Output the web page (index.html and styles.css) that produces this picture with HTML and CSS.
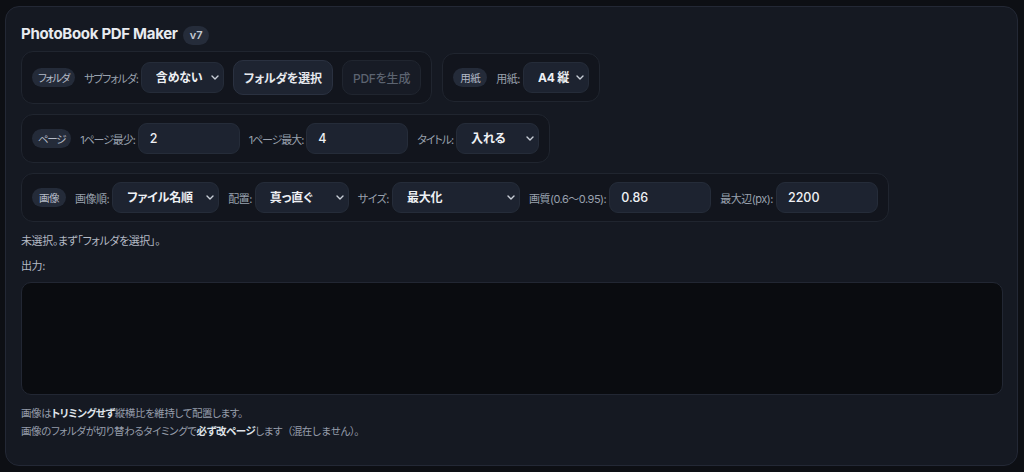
FILE: index.html
```html
<!DOCTYPE html>
<html lang="ja">
<head>
<meta charset="utf-8">
<title>PhotoBook PDF Maker</title>
<link rel="stylesheet" href="styles.css">
</head>
<body>
<main class="card">
  <header class="head">
    <h1 class="title">PhotoBook PDF Maker</h1>
    <span class="badge">v7</span>
  </header>

  <div class="row">
    <section class="group">
      <span class="tag kana">フォルダ</span>
      <label class="field"><span class="lbl kana">サブフォルダ:</span>
        <span class="select w83"><select><option>含めない</option><option>含める</option></select>
          <svg class="chev" viewBox="0 0 8 5" width="8" height="5"><path d="M1 1l3 3 3-3" fill="none" stroke="currentColor" stroke-width="1.4" stroke-linecap="round" stroke-linejoin="round"/></svg></span>
      </label>
      <button class="btn">フォルダを選択</button>
      <button class="btn" disabled>PDFを生成</button>
    </section>
    <section class="group">
      <span class="tag">用紙</span>
      <label class="field"><span class="lbl">用紙:</span>
        <span class="select w66"><select><option>A4 縦</option><option>A4 横</option></select>
          <svg class="chev" viewBox="0 0 8 5" width="8" height="5"><path d="M1 1l3 3 3-3" fill="none" stroke="currentColor" stroke-width="1.4" stroke-linecap="round" stroke-linejoin="round"/></svg></span>
      </label>
    </section>
  </div>

  <div class="row">
    <section class="group">
      <span class="tag kana">ページ</span>
      <label class="field"><span class="lbl kana">1ページ最少:</span><input class="input" type="text" value="2"></label>
      <label class="field"><span class="lbl kana">1ページ最大:</span><input class="input" type="text" value="4"></label>
      <label class="field"><span class="lbl kana">タイトル:</span>
        <span class="select w83"><select><option>入れる</option><option>入れない</option></select>
          <svg class="chev" viewBox="0 0 8 5" width="8" height="5"><path d="M1 1l3 3 3-3" fill="none" stroke="currentColor" stroke-width="1.4" stroke-linecap="round" stroke-linejoin="round"/></svg></span>
      </label>
    </section>
  </div>

  <div class="row">
    <section class="group">
      <span class="tag">画像</span>
      <label class="field"><span class="lbl">画像順:</span>
        <span class="select w107"><select><option>ファイル名順</option><option>撮影日時順</option></select>
          <svg class="chev" viewBox="0 0 8 5" width="8" height="5"><path d="M1 1l3 3 3-3" fill="none" stroke="currentColor" stroke-width="1.4" stroke-linecap="round" stroke-linejoin="round"/></svg></span>
      </label>
      <label class="field"><span class="lbl">配置:</span>
        <span class="select w94"><select><option>真っ直ぐ</option><option>ランダム</option></select>
          <svg class="chev" viewBox="0 0 8 5" width="8" height="5"><path d="M1 1l3 3 3-3" fill="none" stroke="currentColor" stroke-width="1.4" stroke-linecap="round" stroke-linejoin="round"/></svg></span>
      </label>
      <label class="field"><span class="lbl">サイズ:</span>
        <span class="select w128"><select><option>最大化</option><option>ページに合わせる</option></select>
          <svg class="chev" viewBox="0 0 8 5" width="8" height="5"><path d="M1 1l3 3 3-3" fill="none" stroke="currentColor" stroke-width="1.4" stroke-linecap="round" stroke-linejoin="round"/></svg></span>
      </label>
      <label class="field"><span class="lbl">画質(0.6〜0.95):</span><input class="input" type="text" value="0.86"></label>
      <label class="field"><span class="lbl">最大辺(px):</span><input class="input" type="text" value="2200"></label>
    </section>
  </div>

  <p class="status">未選択。まず「フォルダを選択」。</p>
  <p class="out-label">出力:</p>
  <div class="output"></div>

  <div class="notes">
    <p>画像は<b>トリミングせず</b>縦横比を維持して配置します。</p>
    <p>画像のフォルダが切り替わるタイミングで<b>必ず改ページ</b>します<span class="paren">（混在しません）。</span></p>
  </div>
</main>
</body>
</html>
```

FILE: styles.css
```css
* { box-sizing: border-box; }

html, body {
  margin: 0;
  height: 100%;
}

body {
  background: #0d0f14;
  padding: 6px 6px 6px 5px;
  font-family: "Inter", "Noto Sans CJK JP", sans-serif;
  color: #d6dae1;
  font-feature-settings: "palt";
}

.card {
  height: 100%;
  background: #151922;
  border: 1px solid #232835;
  border-radius: 14px;
  padding: 14px 14px 20px 15px;
}

.head {
  display: flex;
  align-items: center;
  gap: 5px;
  height: 24px;
  margin-bottom: 6px;
}

.title {
  margin: 0;
  font-size: 15px;
  font-weight: 700;
  letter-spacing: -0.3px;
  color: #e8ebf0;
  line-height: 24px;
  position: relative;
  top: 1px;
}

.badge {
  display: inline-flex;
  align-items: center;
  height: 19px;
  padding: 0 7px;
  margin-top: 4px;
  border-radius: 10px;
  background: #252c3a;
  color: #c3c9d3;
  font-size: 11px;
  font-weight: 600;
}

.row {
  display: flex;
  align-items: center;
  gap: 10px;
  margin-bottom: 10px;
}

.group {
  display: flex;
  align-items: center;
  gap: 9px;
  padding: 8px 10px;
  background: #12151d;
  border: 1px solid #20252f;
  border-radius: 12px;
}

.tag {
  display: inline-flex;
  align-items: center;
  height: 19px;
  padding: 0 7px;
  border-radius: 10px;
  background: #242b39;
  color: #b5bcc8;
  font-size: 10.5px;
  letter-spacing: -0.5px;
}

.tag.kana {
  padding: 0 6px;
  letter-spacing: -1.3px;
}

.field {
  display: flex;
  align-items: center;
  gap: 3px;
}

.lbl {
  font-size: 11px;
  letter-spacing: -0.5px;
  color: #99a1ae;
}

.lbl.kana {
  letter-spacing: -1.1px;
}

.select {
  position: relative;
  display: inline-block;
  height: 31px;
}

.select select {
  appearance: none;
  -webkit-appearance: none;
  width: 100%;
  height: 100%;
  margin: 0;
  padding: 0 16px 0 14px;
  background: #1d2330;
  border: 1px solid #252c39;
  border-radius: 9px;
  color: #eef0f4;
  font-family: inherit;
  font-feature-settings: "palt";
  font-size: 12px;
  letter-spacing: -0.2px;
  font-weight: 700;
  outline: none;
}

.chev {
  position: absolute;
  right: 5px;
  top: 13px;
  color: #c9ced7;
  pointer-events: none;
}

.w66 { width: 66px; }
.w83 { width: 83px; }
.w94 { width: 94px; }
.w107 { width: 107px; }
.w128 { width: 128px; }

.input {
  width: 102px;
  height: 31px;
  margin: 0;
  padding: 0 11px;
  background: #1d2330;
  border: 1px solid #252c39;
  border-radius: 9px;
  color: #eef0f4;
  font-family: inherit;
  font-size: 12.5px;
  font-weight: 500;
  outline: none;
}

.btn {
  height: 35px;
  padding: 0 10px;
  background: #1e2431;
  border: 1px solid #2a3140;
  border-radius: 10px;
  color: #e6e9ee;
  font-family: inherit;
  font-feature-settings: "palt";
  font-size: 12px;
  letter-spacing: -0.2px;
  font-weight: 700;
}

.btn:disabled {
  background: #171b25;
  border-color: #20252f;
  color: #5c6370;
  font-weight: 500;
}

.status, .out-label {
  margin: 0;
  font-size: 11px;
  letter-spacing: -0.4px;
  line-height: 18px;
  color: #b4bac5;
}

.status { margin-top: 0; margin-bottom: 7px; }
.out-label { margin-bottom: 7px; }

.output {
  height: 113px;
  background: #0a0c10;
  border: 1px solid #222733;
  border-radius: 10px;
}

.notes {
  margin-top: 10px;
  font-size: 10.5px;
  letter-spacing: -0.4px;
  line-height: 18px;
  color: #959dab;
}

.notes p { margin: 0; }

.notes b {
  color: #dfe3e9;
  font-weight: 700;
}

.paren {
  font-feature-settings: normal;
  letter-spacing: -0.8px;
}
```
